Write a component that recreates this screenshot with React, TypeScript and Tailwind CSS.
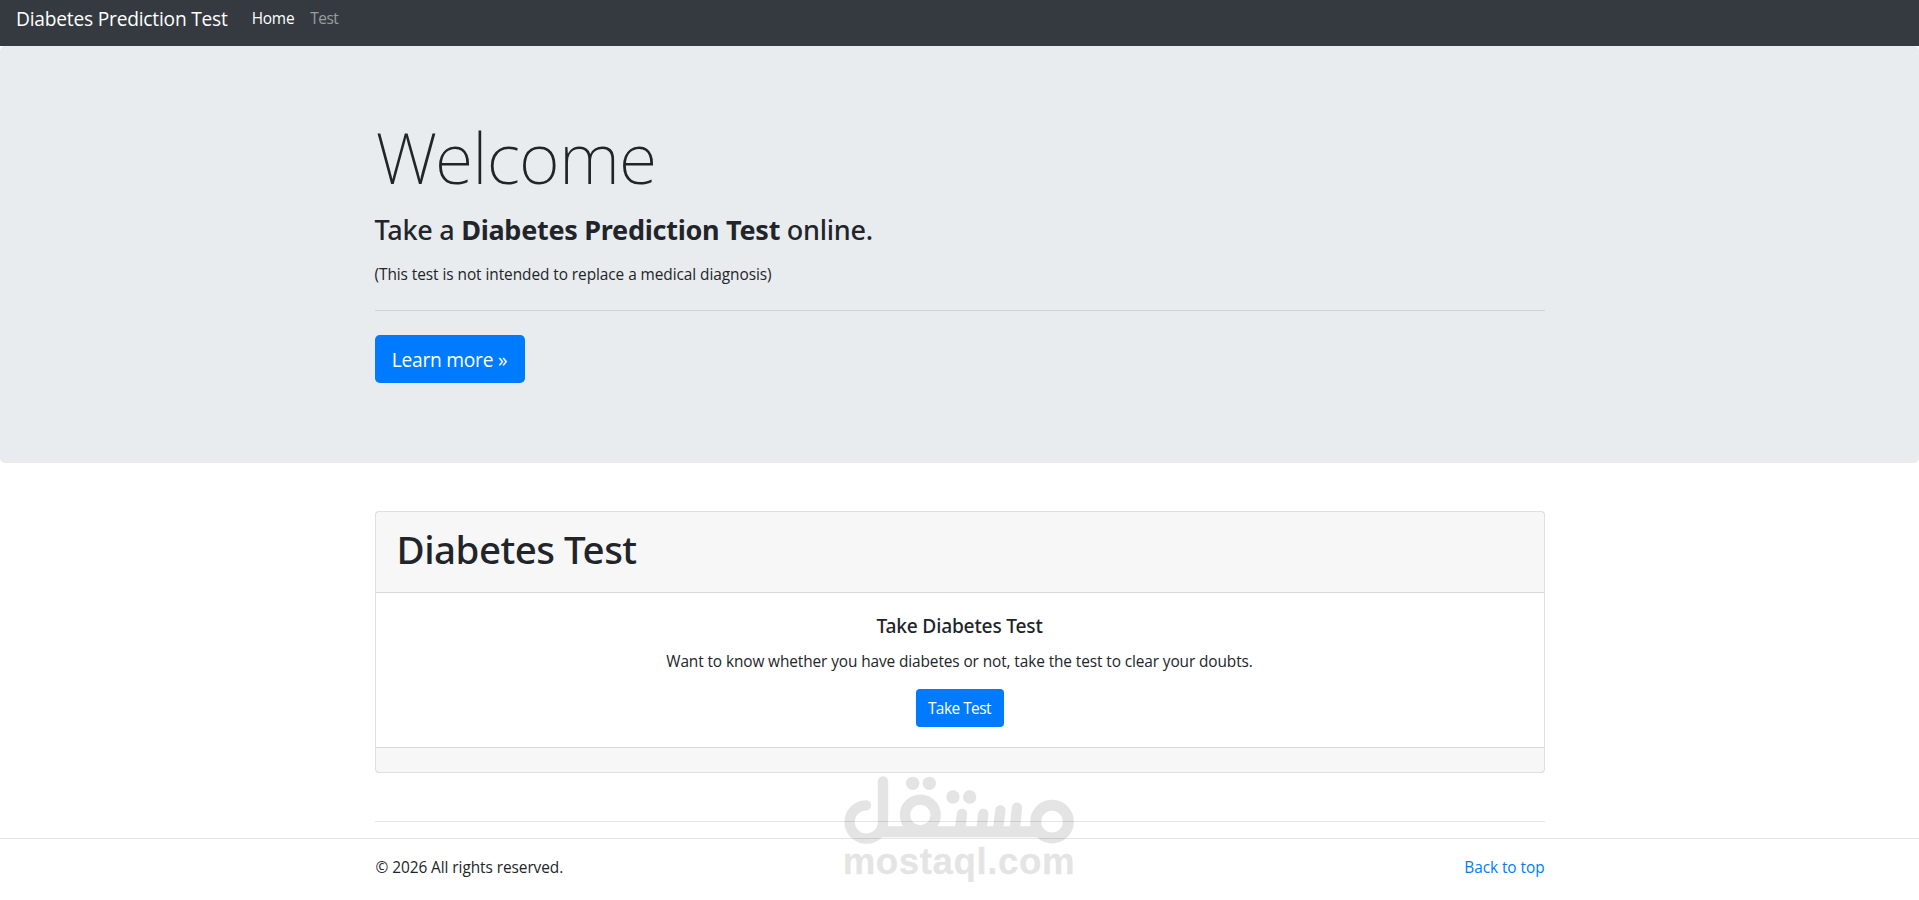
import React from "react";

const navLinks = [
  { label: "Home", className: "text-white tracking-[-0.2px]" },
  { label: "Test", className: "text-white/50 tracking-[-0.5px]" },
];

function Navbar() {
  return (
    <nav className="flex h-[46px] items-start bg-[#343a40] pl-4">
      <a href="#" className="mr-4 pt-1 text-[19.2px] leading-[30px] tracking-[-0.22px] text-white">
        Diabetes Prediction Test
      </a>
      <ul className="flex pt-[7px]">
        {navLinks.map((link) => (
          <li key={link.label}>
            <a href="#" className={`block px-2 text-[15.4px] leading-6 ${link.className}`}>
              {link.label}
            </a>
          </li>
        ))}
      </ul>
    </nav>
  );
}

function Hero() {
  return (
    <div className="h-[417px] rounded-[4.8px] bg-[#e9ecef] pt-16">
      <div className="mx-auto w-[1170px]">
        <h1 className="pl-px pt-1 font-['Noto_Sans'] text-[70px] font-extralight leading-[86px] tracking-[-0.8px]">Welcome</h1>
        <h3 className="mt-[13px] font-['Noto_Sans'] text-[27px] font-medium leading-[34px] tracking-[-0.27px]">
          Take a <b className="font-bold">Diabetes Prediction Test</b> online.
        </h3>
        <p className="mt-4 text-[15.4px] leading-6 tracking-[-0.06px]">
          (This test is not intended to replace a medical diagnosis)
        </p>
        <hr className="mt-[23px] border-black/10" />
        <a
          href="#"
          className="mt-6 inline-flex h-12 w-[150px] items-center justify-center rounded-[4.8px] bg-[#007bff] pt-0.5 text-[19.2px] tracking-[-0.25px] text-white"
        >
          Learn more »
        </a>
      </div>
    </div>
  );
}

function TestCard() {
  return (
    <div className="mt-12 h-[262px] rounded border border-black/[.125] bg-white">
      <div className="h-[81px] border-b border-black/[.125] bg-black/[.03] px-[21px] pt-[13px]">
        <h1 className="font-['Noto_Sans'] text-[38.5px] font-medium leading-12 tracking-[-0.5px]">Diabetes Test</h1>
      </div>
      <div className="flex h-[154px] flex-col items-center pt-[21px]">
        <h5 className="font-['Noto_Sans'] text-[19.2px] font-medium leading-6 tracking-[-0.2px]">Take Diabetes Test</h5>
        <p className="mt-3 text-[15.4px] leading-6 tracking-[-0.1px]">
          Want to know whether you have diabetes or not, take the test to clear your doubts.
        </p>
        <a
          href="#"
          className="mt-[15px] flex h-[38px] w-[88px] items-center justify-center rounded bg-[#007bff] pt-0.5 text-[15.4px] tracking-[-0.5px] text-white"
        >
          Take Test
        </a>
      </div>
      <div className="h-[25px] border-t border-black/[.125] bg-black/[.03]" />
    </div>
  );
}

function Watermark() {
  return (
    <svg
      className="pointer-events-none absolute left-[820px] top-[750px] opacity-10"
      width="280"
      height="150"
      viewBox="0 0 840 450"
    >
      <g fill="none" stroke="#000" strokeWidth="31" strokeLinecap="round">
        <path d="M138 166A50 50 0 1 0 189 215V94" />
        <path d="M185 245H655" strokeWidth="33" strokeLinecap="butt" />
        <circle cx="301" cy="195" r="46" />
        <path d="M426 192L420 240M490 192L484 240M541 181L534 240M591 173L584 240" />
        <circle cx="696" cy="215" r="49" strokeWidth="33" />
      </g>
      <circle cx="278" cy="100" r="20" />
      <circle cx="328" cy="100" r="20" />
      <circle cx="399" cy="141" r="20" />
      <circle cx="449" cy="141" r="20" />
      <text
        x="68"
        y="371"
        textLength="696"
        className="font-['Liberation_Sans'] text-[110px] font-bold"
        stroke="#000"
        strokeWidth="1"
        strokeLinejoin="round"
      >
        mostaql.com
      </text>
    </svg>
  );
}

export default function App() {
  return (
    <div className="relative h-[900px] overflow-hidden bg-white font-['Open_Sans',sans-serif] text-[#212529]">
      <Navbar />
      <Hero />
      <main className="mx-auto w-[1170px]">
        <TestCard />
        <hr className="mt-12 border-black/10" />
      </main>
      <footer className="mt-4 border-t border-black/10 pt-[17px]">
        <div className="mx-auto flex w-[1170px] justify-between text-[15.4px] leading-6">
          <p className="pl-px tracking-[-0.06px]">© 2026 All rights reserved.</p>
          <a href="#" className="tracking-[-0.06px] text-[#007bff]">
            Back to top
          </a>
        </div>
      </footer>
      <Watermark />
    </div>
  );
}
